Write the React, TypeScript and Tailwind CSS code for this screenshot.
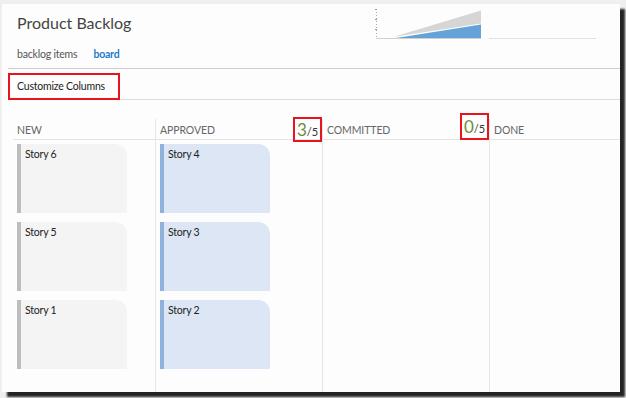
import React from 'react';

type Variant = 'new' | 'approved';

const NEW_CARDS = ['Story 6', 'Story 5', 'Story 1'];
const APPROVED_CARDS = ['Story 4', 'Story 3', 'Story 2'];

const Card: React.FC<{ title: string; variant: Variant }> = ({ title, variant }) => (
  <div
    className={
      variant === 'new'
        ? 'h-[69px] w-[110px] rounded-tr-[12px] border-l-[4px] border-[#bdbdbd] bg-[#f4f4f4] pl-[4px] pt-[3px] text-[10.5px] tracking-[-0.2px] text-[#222]'
        : 'h-[69px] w-[110px] rounded-tr-[12px] border-l-[4px] border-[#8fb1dc] bg-[#dce6f4] pl-[4px] pt-[3px] text-[10.5px] tracking-[-0.2px] text-[#222]'
    }
  >
    {title}
  </div>
);

const Limit: React.FC<{ value: number; max: number; tall?: boolean }> = ({ value, max, tall }) => (
  <div
    className={
      tall
        ? 'relative z-10 mb-[-1px] flex h-[27px] w-[29px] items-baseline justify-center self-end border-2 border-[#e8141c] pt-[2px]'
        : 'relative z-10 flex h-[25px] w-[29px] items-baseline justify-center self-center border-2 border-[#e8141c] pt-[1px]'
    }
  >
    <span className="text-[17px] leading-[20px] text-[#6b8d3e]">{value}</span>
    <span className="text-[11px] text-[#333]">/{max}</span>
  </div>
);

const Column: React.FC<{
  title: string;
  width: string;
  first?: boolean;
  limit?: { value: number; max: number; tall?: boolean };
  cards?: string[];
  variant?: Variant;
}> = ({ title, width, first, limit, cards = [], variant = 'new' }) => (
  <div className={`${width} flex flex-col ${first ? '' : 'border-l border-[#e6e6e6]'}`}>
    <div className="flex h-[21px] items-center justify-between border-b border-[#e3e3e3] pl-[4px]">
      <span className="pt-[4px] text-[10.5px] tracking-[-0.1px] text-[#666]">{title}</span>
      {limit && <Limit {...limit} />}
    </div>
    <div className="flex flex-1 flex-col gap-[9px] pl-[4px] pt-[4px]">
      {cards.map(c => (
        <Card key={c} title={c} variant={variant} />
      ))}
    </div>
  </div>
);

const Burndown: React.FC = () => (
  <svg width="227" height="40" viewBox="0 0 227 40" className="shrink-0">
    <line x1="3.5" y1="5" x2="3.5" y2="34" stroke="#aaa" strokeDasharray="1 2" />
    <line x1="2" y1="5.5" x2="4" y2="5.5" stroke="#999" />
    <line x1="2" y1="15.5" x2="4" y2="15.5" stroke="#999" />
    <line x1="2" y1="25.5" x2="4" y2="25.5" stroke="#999" />
    <polygon points="20,33 108,6.5 108,19.5" fill="#d6d6d6" />
    <polygon points="20,34.5 108,20.5 108,34.5" fill="#65a2d7" />
    <line x1="3" y1="34.5" x2="108" y2="34.5" stroke="#cfcfcf" />
    <line x1="116" y1="34.5" x2="223" y2="34.5" stroke="#e2e2e2" />
  </svg>
);

const App: React.FC = () => {
  return (
    <div className="h-[398px] w-[626px] overflow-hidden bg-[#efefef] pl-[2px] pt-[4px] font-['Lato','Liberation_Sans',sans-serif]">
      <div className="flex h-[388px] w-[618px] flex-col bg-[#fdfdfd] shadow-[5px_5px_2px_rgba(0,0,0,0.85)]">
        {/* header */}
        <div className="ml-[6px] flex h-[65px] shrink-0 border-b border-[#cfcfcf]">
          <div className="w-[365px] pl-[9px]">
            <div className="pt-[9px] text-[16px] leading-[20px] text-[#444]">Product Backlog</div>
            <div className="mt-[14px] flex gap-[16px] text-[10.5px] leading-[15px] tracking-[-0.2px]">
              <span className="text-[#555]">backlog items</span>
              <span className="font-bold text-[#1f7bc8]">board</span>
            </div>
          </div>
          <Burndown />
        </div>

        {/* toolbar */}
        <div className="ml-[6px] flex h-[31px] shrink-0 items-end border-b border-[#dcdcdc]">
          <div className="relative z-10 mb-[-1px] flex h-[27px] w-[112px] items-center border-2 border-[#e8141c] pl-[7px] text-[10.5px] tracking-[-0.2px] text-[#222]">
            Customize Columns
          </div>
        </div>

        {/* board */}
        <div className="ml-[11px] mt-[19px] flex flex-1">
          <Column title="NEW" width="w-[142px]" first cards={NEW_CARDS} variant="new" />
          <Column
            title="APPROVED"
            width="w-[167px]"
            limit={{ value: 3, max: 5 }}
            cards={APPROVED_CARDS}
            variant="approved"
          />
          <Column title="COMMITTED" width="w-[167px]" limit={{ value: 0, max: 5, tall: true }} />
          <Column title="DONE" width="flex-1" />
        </div>
      </div>
    </div>
  );
};

export default App;
